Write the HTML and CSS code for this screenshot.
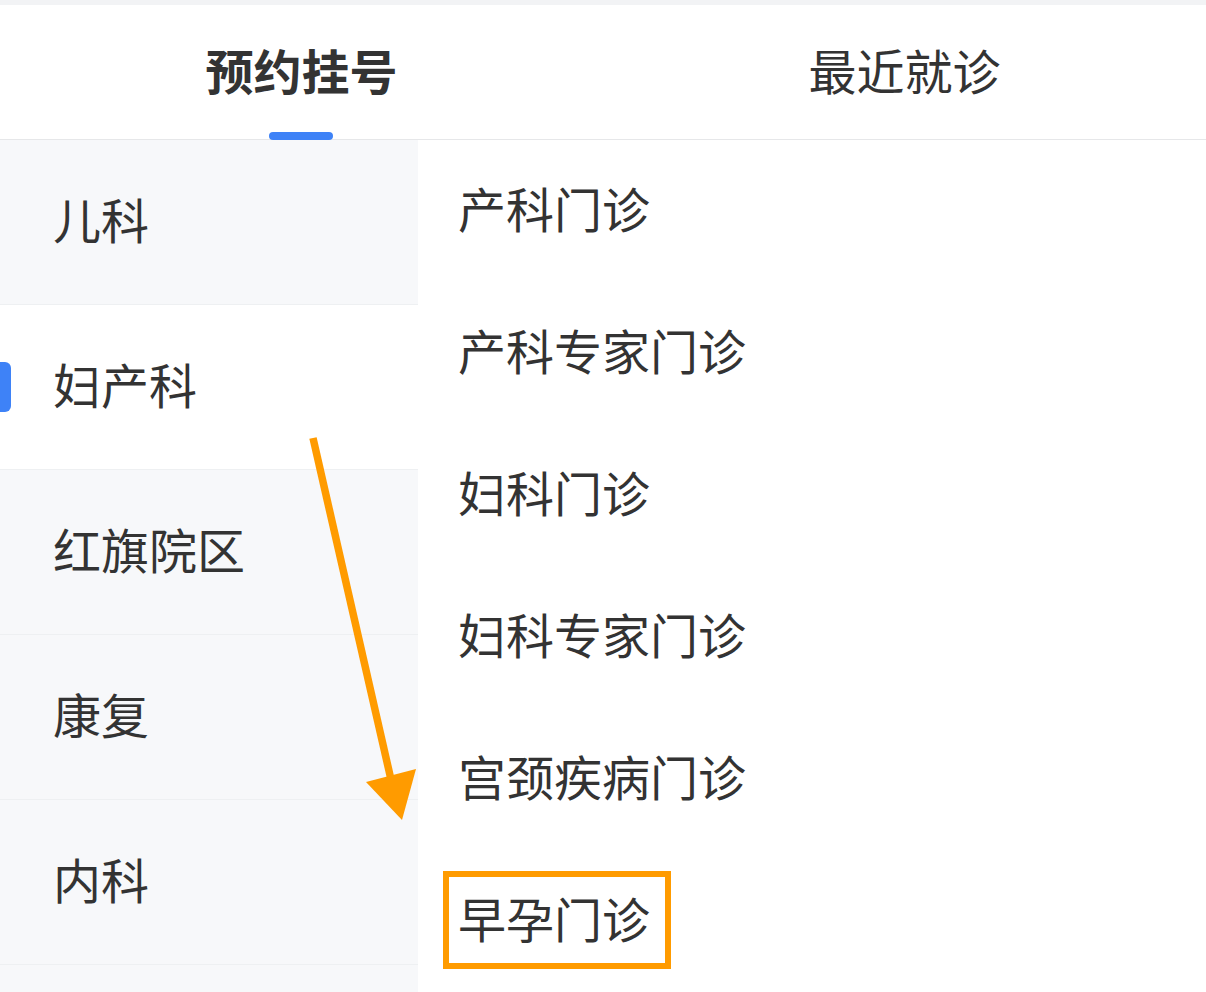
FILE: index.html
```html
<!DOCTYPE html>
<html lang="zh-CN">
<head>
    <meta charset="UTF-8">
    <meta name="viewport" content="width=device-width, initial-scale=1.0">
    <title>预约挂号</title>
    <link rel="stylesheet" href="styles.css">
</head>
<body>

<div class="page">
    <!-- Tabs -->
    <header class="tabs">
        <div class="tab active">预约挂号</div>
        <div class="tab">最近就诊</div>
    </header>

    <div class="main">
        <!-- Departments -->
        <ul class="depts">
            <li>儿科</li>
            <li class="selected">妇产科</li>
            <li>红旗院区</li>
            <li>康复</li>
            <li>内科</li>
            <li></li>
        </ul>

        <!-- Clinics -->
        <ul class="clinics">
            <li>产科门诊</li>
            <li>产科专家门诊</li>
            <li>妇科门诊</li>
            <li>妇科专家门诊</li>
            <li>宫颈疾病门诊</li>
            <li><span class="mark">早孕门诊</span></li>
        </ul>
    </div>

    <!-- Annotation arrow -->
    <svg class="arrow" width="1206" height="992" viewBox="0 0 1206 992">
        <line x1="313" y1="438" x2="392" y2="784" stroke="#ff9b00" stroke-width="7.5"/>
        <polygon points="366,782 416,769 402,820" fill="#ff9b00"/>
    </svg>
</div>

</body>
</html>
```

FILE: styles.css
```css
/* General */
body {
    margin: 0;
    padding: 0;
    font-family: "Noto Sans CJK SC", "Noto Sans", sans-serif;
    color: #333;
    background-color: #fff;
}

ul {
    list-style: none;
    margin: 0;
    padding: 0;
}

.page {
    position: relative;
    width: 1206px;
    height: 992px;
    overflow: hidden;
    border-top: 5px solid #f2f3f5;
    box-sizing: border-box;
}

/* Tabs */
.tabs {
    display: flex;
    height: 134px;
    border-bottom: 1px solid #e6e7e9;
}

.tab {
    flex: 1;
    display: flex;
    align-items: center;
    justify-content: center;
    padding-bottom: 6px;
    font-size: 48px;
    line-height: 1;
    position: relative;
}

.tab.active {
    font-weight: bold;
}

.tab.active::after {
    content: "";
    position: absolute;
    left: 50%;
    bottom: -1px;
    width: 64px;
    height: 8px;
    margin-left: -33px;
    border-radius: 4px;
    background-color: #3e82f7;
}

/* Layout */
.main {
    display: flex;
}

/* Department list */
.depts {
    width: 418px;
    flex-shrink: 0;
    background-color: #f7f8fa;
}

.depts li {
    position: relative;
    height: 165px;
    box-sizing: border-box;
    border-bottom: 1px solid #eef0f2;
    display: flex;
    align-items: center;
    padding: 0 0 8px 53px;
    font-size: 48px;
    line-height: 1;
}

.depts li.selected {
    background-color: #fff;
}

.depts li.selected::before {
    content: "";
    position: absolute;
    left: 0;
    top: 57px;
    width: 11px;
    height: 50px;
    border-radius: 0 6px 6px 0;
    background-color: #3e82f7;
}

/* Clinic list */
.clinics {
    flex: 1;
    padding-left: 40px;
}

.clinics li {
    height: 142px;
    box-sizing: border-box;
    display: flex;
    align-items: center;
    padding-bottom: 8px;
    font-size: 48px;
    line-height: 1;
}

/* Highlight box round one clinic */
.mark {
    position: relative;
}

.mark::after {
    content: "";
    position: absolute;
    left: -15px;
    right: -21px;
    top: -22px;
    bottom: -28px;
    border: 6px solid #ff9b00;
}

/* Annotation */
.arrow {
    position: absolute;
    left: 0;
    top: -5px;
}
```
